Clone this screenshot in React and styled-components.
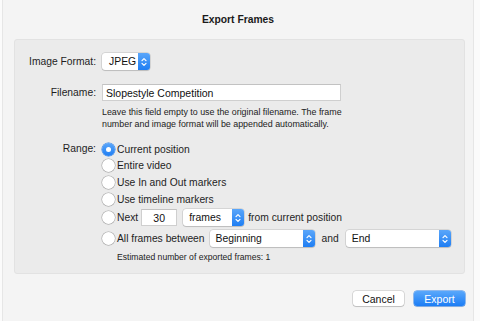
import React from "react";
import styled, { createGlobalStyle } from "styled-components";

const Global = createGlobalStyle`
  html, body { margin: 0; padding: 0; background: #fbfbfb; }
  body { font-family: "Liberation Sans", Arial, sans-serif; color: #1e1e1e; -webkit-font-smoothing: antialiased; }
  * { box-sizing: border-box; }
`;

const Window = styled.div`
  margin-left: 2px;
  width: 472px;
  height: 321px;
  background: #f4f4f4;
  border-left: 1px solid #e6e6e6;
  border-right: 1px solid #e6e6e6;
  display: flex;
  flex-direction: column;
`;

const Title = styled.div`
  height: 39px;
  display: flex;
  align-items: center;
  justify-content: center;
  font-weight: bold;
  font-size: 10.3px;
  color: #1a1a1a;
  padding-bottom: 1px;
`;

const Panel = styled.div`
  margin: 0 8px 0 11px;
  height: 235px;
  background: #ebebeb;
  border: 1px solid #e2e2e2;
  border-radius: 3px;
  padding: 13px 0 0 0;
  display: flex;
  flex-direction: column;
`;

const FormRow = styled.div`
  display: flex;
  align-items: ${(p) => (p.$top ? "flex-start" : "center")};
  margin-top: ${(p) => p.$mt || 0}px;
`;

const Label = styled.div`
  width: 81px;
  text-align: right;
  font-size: 10.3px;
  flex: none;
  margin-right: 6px;
  line-height: ${(p) => p.$lh || 17}px;
`;

const Column = styled.div`
  display: flex;
  flex-direction: column;
`;

const TextInput = styled.div`
  width: ${(p) => p.$w}px;
  height: 17px;
  background: #fff;
  border: 1px solid #cfcfcf;
  border-top-color: #c2c2c2;
  font-size: 10.5px;
  display: flex;
  align-items: center;
  justify-content: ${(p) => (p.$center ? "center" : "flex-start")};
  padding-left: ${(p) => (p.$center ? 0 : 3)}px;
  color: #111;
  flex: none;
`;

const Help = styled.div`
  margin-top: 5px;
  font-size: 8.9px;
  line-height: 12px;
  color: #222;
  width: 250px;
`;

const SelectBox = styled.div`
  width: ${(p) => p.$w}px;
  height: 17px;
  background: #fff;
  border-radius: 3px;
  box-shadow: 0 0 0 0.5px rgba(0,0,0,0.18), 0 1px 1px rgba(0,0,0,0.12);
  display: flex;
  align-items: center;
  font-size: 10.4px;
  color: #111;
  flex: none;
`;

const SelectText = styled.div`
  flex: 1;
  padding-left: ${(p) => p.$pl || 6}px;
  white-space: nowrap;
`;

const Stepper = styled.div`
  width: 12px;
  height: 17px;
  border-radius: 0 3px 3px 0;
  background: linear-gradient(#5aa6fa, #1f7ef3);
  display: flex;
  align-items: center;
  justify-content: center;
`;

const Chevrons = () => (
  <svg width="6" height="10" viewBox="0 0 6 10">
    <path d="M1 3.6 L3 1.6 L5 3.6 M1 6.4 L3 8.4 L5 6.4" fill="none" stroke="#fff" strokeWidth="1.2" strokeLinecap="round" strokeLinejoin="round" />
  </svg>
);

const Select = ({ w, children, pl }) => (
  <SelectBox $w={w}>
    <SelectText $pl={pl}>{children}</SelectText>
    <Stepper>
      <Chevrons />
    </Stepper>
  </SelectBox>
);

const RangeList = styled.div`
  display: flex;
  flex-direction: column;
`;

const RadioRow = styled.div`
  display: flex;
  align-items: center;
  height: ${(p) => p.$h || 16.6}px;
  margin-top: ${(p) => p.$mt || 0}px;
  font-size: 10.3px;
  white-space: nowrap;
`;

const Radio = styled.span`
  width: 13px;
  height: 13px;
  border-radius: 50%;
  flex: none;
  margin-right: 2px;
  display: flex;
  align-items: center;
  justify-content: center;
  background: ${(p) => (p.$on ? "linear-gradient(#5aa6fa, #1f7ef3)" : "#fff")};
  box-shadow: ${(p) =>
    p.$on ? "0 0 0 0.5px #2a7fe8" : "0 0 0 0.5px rgba(0,0,0,0.28), 0 0.5px 1px rgba(0,0,0,0.12)"};
  &::after {
    content: "";
    display: ${(p) => (p.$on ? "block" : "none")};
    width: 5px;
    height: 5px;
    border-radius: 50%;
    background: #fff;
  }
`;

const Inline = styled.span`
  margin: 0 ${(p) => p.$mr || 0}px 0 ${(p) => p.$ml || 0}px;
`;

const Estimate = styled.div`
  margin-top: 4px;
  padding-left: 15px;
  font-size: 8.6px;
  line-height: 12px;
  color: #222;
`;

const Footer = styled.div`
  display: flex;
  justify-content: flex-end;
  gap: 10px;
  padding: 17px 8px 0 0;
`;

const Button = styled.div`
  width: 51px;
  height: 15px;
  border-radius: 3px;
  font-size: 10.5px;
  display: flex;
  align-items: center;
  justify-content: center;
  color: ${(p) => (p.$primary ? "#fff" : "#111")};
  background: ${(p) => (p.$primary ? "linear-gradient(#5aa8fb, #1c7df5)" : "#fff")};
  box-shadow: ${(p) =>
    p.$primary ? "0 0 0 0.5px #2a7fe8, 0 1px 1px rgba(0,0,0,0.12)" : "0 0 0 0.5px rgba(0,0,0,0.22), 0 1px 1px rgba(0,0,0,0.12)"};
`;

export default function App() {
  return (
    <>
      <Global />
      <Window>
        <Title>Export Frames</Title>
        <Panel>
          <FormRow>
            <Label>Image Format:</Label>
            <Select w={48} pl={7}>JPEG</Select>
          </FormRow>
          <FormRow $top $mt={14}>
            <Label>Filename:</Label>
            <Column>
              <TextInput $w={239}>Slopestyle Competition</TextInput>
              <Help>
                Leave this field empty to use the original filename. The frame
                number and image format will be appended automatically.
              </Help>
            </Column>
          </FormRow>
          <FormRow $top $mt={11}>
            <Label $lh={16.6}>Range:</Label>
            <Column>
              <RangeList>
                <RadioRow>
                  <Radio $on />
                  Current position
                </RadioRow>
                <RadioRow>
                  <Radio />
                  Entire video
                </RadioRow>
                <RadioRow>
                  <Radio />
                  Use In and Out markers
                </RadioRow>
                <RadioRow>
                  <Radio />
                  Use timeline markers
                </RadioRow>
                <RadioRow $h={17} $mt={2}>
                  <Radio />
                  <Inline $mr={3}>Next</Inline>
                  <TextInput $w={36} $center>30</TextInput>
                  <Inline $ml={6} />
                  <Select w={61}>frames</Select>
                  <Inline $ml={4}>from current position</Inline>
                </RadioRow>
                <RadioRow $h={17} $mt={4}>
                  <Radio />
                  <Inline $mr={5}>All frames between</Inline>
                  <Select w={105}>Beginning</Select>
                  <Inline $ml={7} $mr={7}>and</Inline>
                  <Select w={105}>End</Select>
                </RadioRow>
              </RangeList>
              <Estimate>Estimated number of exported frames: 1</Estimate>
            </Column>
          </FormRow>
        </Panel>
        <Footer>
          <Button>Cancel</Button>
          <Button $primary>Export</Button>
        </Footer>
      </Window>
    </>
  );
}
